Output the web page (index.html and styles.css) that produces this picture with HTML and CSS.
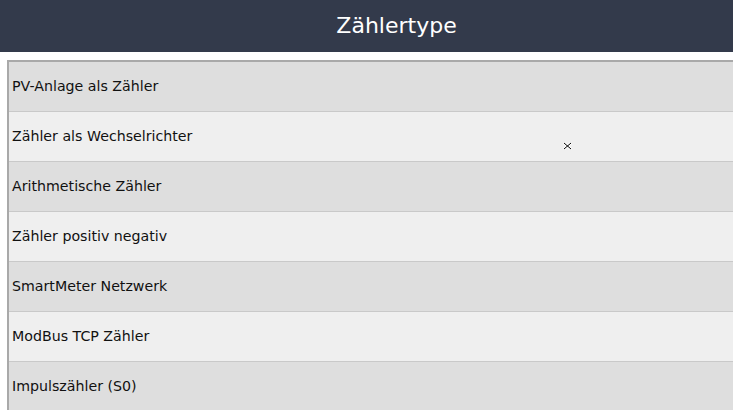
FILE: index.html
```html
<!DOCTYPE html>
<html lang="de">
<head>
<meta charset="utf-8">
<title>Zählertype</title>
<link rel="stylesheet" href="styles.css">
</head>
<body>
<header class="topbar"><h1 class="title">Zählertype</h1></header>
<div class="spacer"></div>
<ul class="list">
  <li class="row odd">PV-Anlage als Zähler</li>
  <li class="row even">Zähler als Wechselrichter</li>
  <li class="row odd">Arithmetische Zähler</li>
  <li class="row even">Zähler positiv negativ</li>
  <li class="row odd">SmartMeter Netzwerk</li>
  <li class="row even">ModBus TCP Zähler</li>
  <li class="row odd">Impulszähler (S0)</li>
</ul>
<svg class="cursor" width="9" height="8" viewBox="0 0 9 8"><path d="M1 1 L8 7 M8 1 L1 7" stroke="#fff" stroke-width="2.5"/><path d="M1 1 L8 7 M8 1 L1 7" stroke="#000" stroke-width="1"/></svg>
</body>
</html>
```
FILE: styles.css
```css
html, body {
  margin: 0;
  padding: 0;
  background: #ffffff;
  overflow: hidden;
  height: 410px;
  font-family: "DejaVu Sans", sans-serif;
}
.topbar {
  height: 52px;
  background: #333a4b;
  display: flex;
  align-items: center;
  justify-content: center;
  padding-left: 60px;
}
.title {
  margin: 0;
  color: #ffffff;
  font-size: 22px;
  font-weight: normal;
  line-height: 1;
}
.spacer {
  height: 8px;
}
.list {
  list-style: none;
  margin: 0 0 0 7px;
  padding: 0;
  border-left: 2px solid #a9a9a9;
  border-top: 2px solid #a9a9a9;
}
.row {
  box-sizing: border-box;
  height: 50px;
  border-bottom: 1px solid #c9c9c9;
  display: flex;
  align-items: center;
  padding-left: 3px;
  padding-bottom: 2px;
  font-size: 14.2px;
  color: #111111;
}
.odd { background: #dedede; }
.even { background: #efefef; }
.cursor {
  position: absolute;
  left: 563px;
  top: 142px;
}
```
